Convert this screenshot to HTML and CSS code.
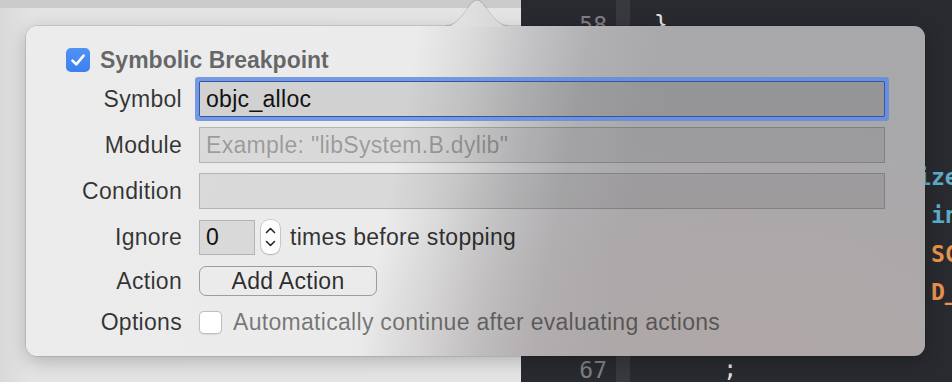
FILE: index.html
```html
<!DOCTYPE html>
<html lang="en">
<head>
<meta charset="utf-8">
<title>Symbolic Breakpoint</title>
<link rel="stylesheet" href="styles.css">
</head>
<body>
  <div class="workspace">
    <div class="left-pane">
      <div class="toolbar-band"></div>
      <div class="left-fill"></div>
    </div>
    <div class="editor">
      <div class="gutter">
        <div class="ln">58</div><div class="ln">59</div><div class="ln">60</div><div class="ln">61</div><div class="ln">62</div><div class="ln">63</div><div class="ln">64</div><div class="ln">65</div><div class="ln">66</div><div class="ln">67</div>
      </div>
      <div class="gutter-strip"></div>
      <div class="code">
        <div class="cl">}</div>
        <div class="cl"> </div>
        <div class="cl"> </div>
        <div class="cl"> </div>
        <div class="cl"><span class="tk-blue">                   ize</span></div>
        <div class="cl"><span class="tk-blue">                    in</span></div>
        <div class="cl"><span class="tk-orange">                    SC</span></div>
        <div class="cl"><span class="tk-orange">                    D_</span></div>
        <div class="cl"> </div>
        <div class="cl">     ;</div>
      </div>
    </div>
  </div>

  <svg class="popover-arrow" width="62" height="28" viewBox="0 0 62 28" aria-hidden="true">
    <defs>
      <linearGradient id="arrowFill" x1="0" y1="0" x2="1" y2="0">
        <stop offset="0" stop-color="#e4e4e4"/>
        <stop offset="1" stop-color="#d6d6d7"/>
      </linearGradient>
    </defs>
    <path d="M0 28 C16 28 22 1.5 31 1.5 C40 1.5 46 28 62 28 Z" fill="url(#arrowFill)"/>
    <path d="M0 26.5 C16 26.5 22 1 31 1 C40 1 46 26.5 62 26.5" fill="none" stroke="rgba(0,0,0,0.14)" stroke-width="1"/>
  </svg>

  <div class="popover">
    <div class="heading">
      <span class="check check-on">
        <svg width="24" height="24" viewBox="0 0 24 24" aria-hidden="true"><path d="M6.5 12.6 L10.3 16.4 L17.6 7.6" fill="none" stroke="#fff" stroke-width="2.6" stroke-linecap="round" stroke-linejoin="round"/></svg>
      </span>
      <span class="heading-text">Symbolic Breakpoint</span>
    </div>
    <div class="form">
      <div class="label">Symbol</div>
      <div class="field field-focus">objc_alloc</div>

      <div class="label">Module</div>
      <div class="field"><span class="placeholder">Example: "libSystem.B.dylib"</span></div>

      <div class="label">Condition</div>
      <div class="field"></div>

      <div class="label">Ignore</div>
      <div class="ignore-row">
        <div class="field field-small">0</div>
        <div class="stepper">
          <svg width="19" height="34" viewBox="0 0 19 34" aria-hidden="true">
            <path d="M5.5 12.5 L9.5 8.5 L13.5 12.5" fill="none" stroke="#262626" stroke-width="1.6" stroke-linecap="round" stroke-linejoin="round"/>
            <path d="M5.5 21.5 L9.5 25.5 L13.5 21.5" fill="none" stroke="#262626" stroke-width="1.6" stroke-linecap="round" stroke-linejoin="round"/>
          </svg>
        </div>
        <span class="row-text">times before stopping</span>
      </div>

      <div class="label">Action</div>
      <div class="action-row">
        <button class="push-button" type="button">Add Action</button>
      </div>

      <div class="label">Options</div>
      <div class="options-row">
        <span class="check check-off"></span>
        <span class="muted-text">Automatically continue after evaluating actions</span>
      </div>
    </div>
  </div>
</body>
</html>
```

FILE: styles.css
```css
html, body {
  margin: 0;
  padding: 0;
}

body {
  width: 952px;
  height: 382px;
  overflow: hidden;
  position: relative;
  font-family: "Liberation Sans", Arial, sans-serif;
}

.workspace {
  display: flex;
  height: 382px;
}

.left-pane {
  flex: none;
  width: 521px;
  display: flex;
  flex-direction: column;
  background: linear-gradient(to right, #d9d9d9, #e3e3e3 30px, #e4e4e4);
}

.toolbar-band {
  height: 8px;
  background: #cbcbcb;
}

.left-fill {
  flex: 1;
}

.editor {
  flex: 1;
  min-width: 0;
  display: flex;
  background: #292a2f;
  font-family: "DejaVu Sans Mono", "Liberation Mono", monospace;
  font-size: 23px;
  line-height: 38.3px;
  overflow: hidden;
}

.gutter {
  flex: none;
  width: 86px;
  padding: 6px 9px 0 0;
  text-align: right;
  color: #7e7f84;
}

.gutter-strip {
  flex: none;
  width: 14px;
  background: #38393e;
}

.code {
  flex: 1;
  min-width: 0;
  padding: 5px 0 0 24px;
  color: #e2e2e3;
  overflow: hidden;
}

.cl {
  height: 38.3px;
  white-space: pre;
}

.tk-blue {
  color: #5eabc9;
  font-weight: bold;
}

.tk-orange {
  color: #e6924c;
  font-weight: bold;
}

/* Popover */
.popover-arrow {
  position: absolute;
  left: 446px;
  top: -1px;
  z-index: 3;
}

.popover {
  position: absolute;
  left: 26px;
  top: 26px;
  width: 899px;
  height: 330px;
  box-sizing: border-box;
  padding: 22px 40px 19px 40px;
  border-radius: 11px;
  z-index: 2;
  background:
    radial-gradient(420px 240px at 82% 100%, rgba(182, 166, 163, 0.55), rgba(182, 166, 163, 0)),
    linear-gradient(100deg, #ececec 0%, #ebebeb 41%, #dadadb 47%, #c3c3c5 53%, #b1b1b4 59%, #a9a9ac 66%, #a8a8ab 100%);
  box-shadow: 0 5px 18px rgba(0, 0, 0, 0.22), 0 0 0 0.5px rgba(0, 0, 0, 0.18);
  letter-spacing: 0.3px;
}

.heading {
  display: flex;
  align-items: center;
  gap: 10px;
  height: 24px;
  margin-bottom: 9px;
}

.heading-text {
  font-size: 23px;
  font-weight: bold;
  color: rgba(0, 0, 0, 0.58);
  letter-spacing: 0;
}

.check {
  box-sizing: border-box;
  display: inline-flex;
  flex: none;
  border-radius: 5px;
}

.check-on {
  width: 24px;
  height: 24px;
  background: linear-gradient(#4f92f6, #3b80f0);
}

.check-off {
  width: 23px;
  height: 23px;
  background: #ffffff;
  border: 1px solid rgba(0, 0, 0, 0.25);
  box-shadow: 0 0.5px 1px rgba(0, 0, 0, 0.08);
}

.form {
  display: grid;
  grid-template-columns: 116px 1fr;
  grid-template-rows: 36px 36px 36px 36px 32px 30px;
  column-gap: 17px;
  row-gap: 10px;
  align-items: center;
}

.label {
  text-align: right;
  font-size: 23px;
  line-height: 36px;
  color: rgba(0, 0, 0, 0.78);
  white-space: nowrap;
}

.field {
  box-sizing: border-box;
  height: 36px;
  padding-left: 6px;
  font-size: 23px;
  line-height: 34px;
  color: #111111;
  border: 1px solid rgba(0, 0, 0, 0.17);
  background: rgba(0, 0, 0, 0.075);
  white-space: nowrap;
  overflow: hidden;
}

.field-focus {
  border-color: #2f56aa;
  border-radius: 1px;
  background: rgba(0, 0, 0, 0.11);
  box-shadow: 0 0 0 4px rgba(96, 140, 224, 0.85);
}

.placeholder {
  color: rgba(0, 0, 0, 0.3);
}

.ignore-row {
  display: flex;
  align-items: center;
  height: 36px;
}

.field-small {
  width: 56px;
  height: 35px;
  line-height: 33px;
}

.stepper {
  width: 19px;
  height: 34px;
  margin-left: 6px;
  border-radius: 8px;
  background: #fdfdfd;
  box-shadow: 0 0 0 0.5px rgba(0, 0, 0, 0.25), 0 1px 1.5px rgba(0, 0, 0, 0.15);
  display: flex;
}

.row-text {
  margin-left: 10px;
  font-size: 23px;
  color: rgba(0, 0, 0, 0.8);
  white-space: nowrap;
}

.action-row {
  display: flex;
  align-items: center;
}

.push-button {
  box-sizing: border-box;
  width: 178px;
  height: 30px;
  margin: 0;
  padding: 0;
  border: 1.5px solid rgba(0, 0, 0, 0.33);
  border-radius: 7px;
  background: transparent;
  font-family: "Liberation Sans", Arial, sans-serif;
  font-size: 23px;
  letter-spacing: 0.3px;
  line-height: 27px;
  color: rgba(0, 0, 0, 0.82);
}

.options-row {
  display: flex;
  align-items: center;
}

.muted-text {
  margin-left: 11px;
  font-size: 23px;
  color: rgba(0, 0, 0, 0.5);
  white-space: nowrap;
}
```
